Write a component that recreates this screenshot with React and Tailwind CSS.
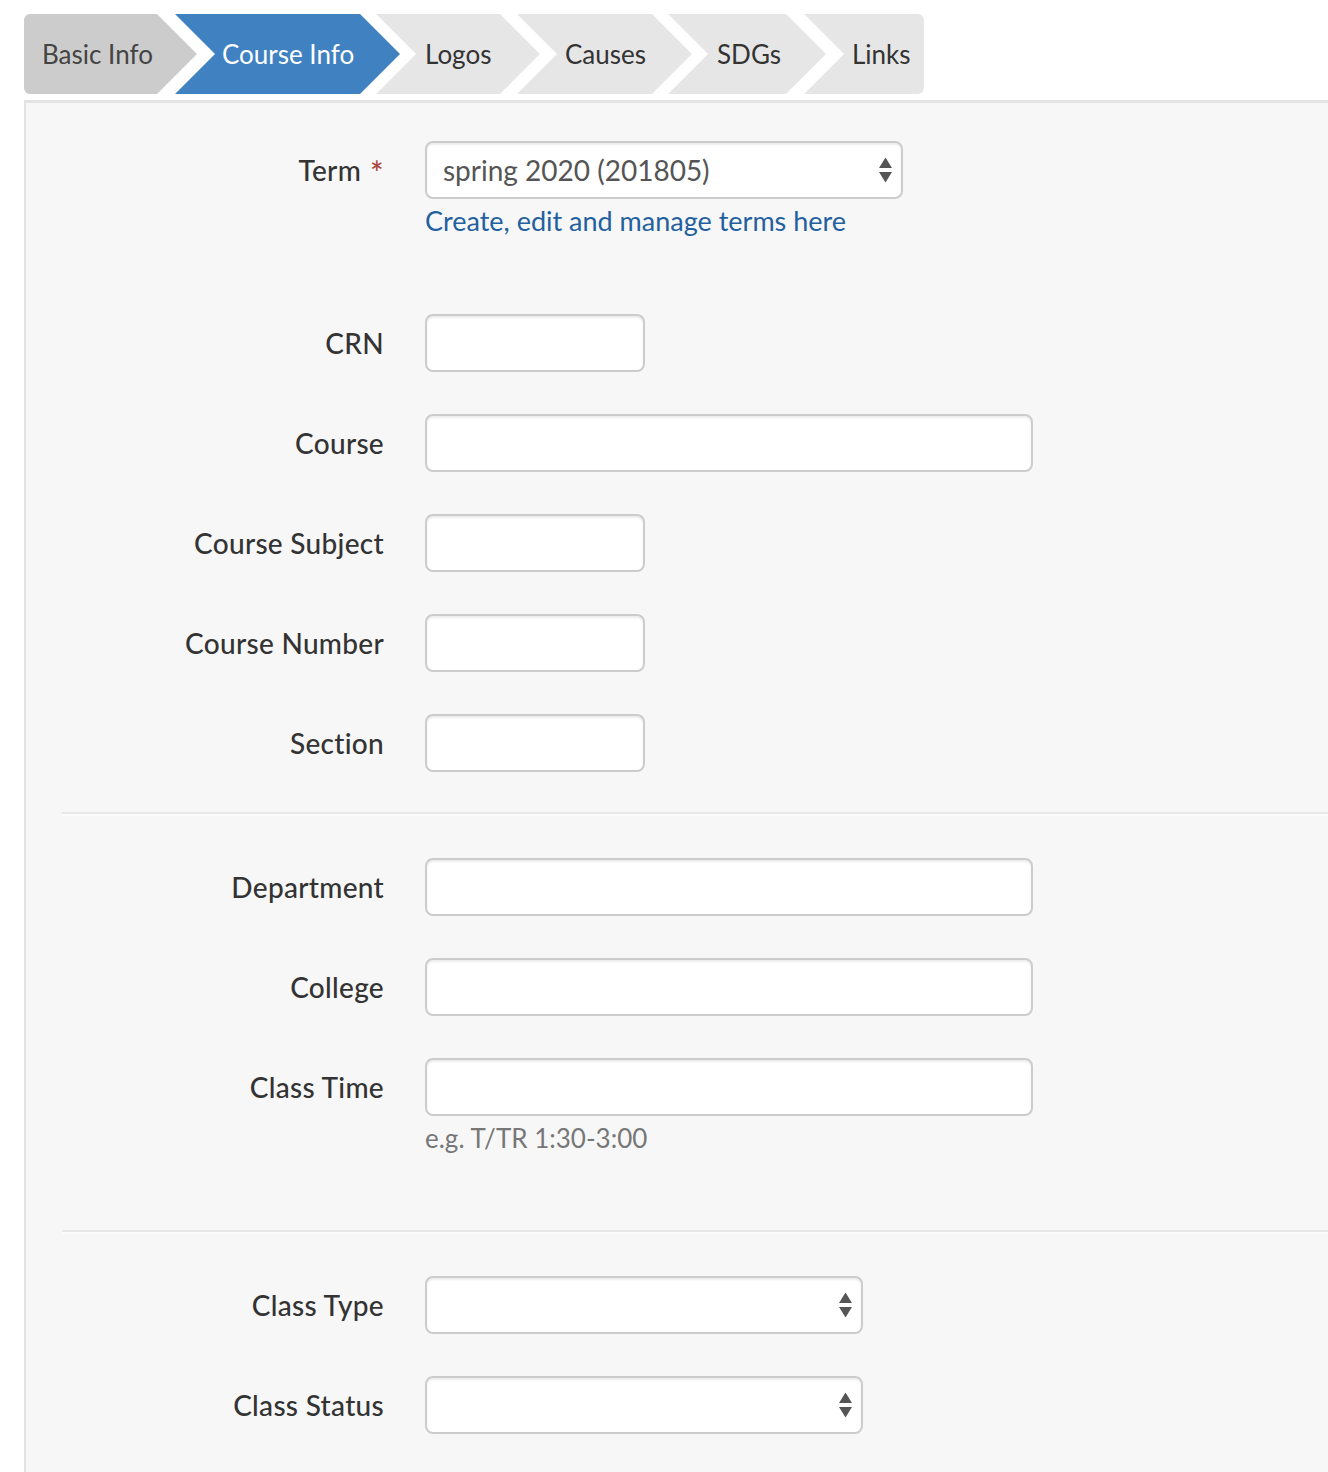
import React from 'react';

const tabs = [
  { label: 'Basic Info', w: 'w-[173px]', ml: '', pl: 'pl-[18px]', bg: 'bg-[#cccccc] text-[#444] rounded-l-[6px]', clip: '[clip-path:polygon(0_0,calc(100%_-_40px)_0,100%_50%,calc(100%_-_40px)_100%,0_100%)]' },
  { label: 'Course Info', w: 'w-[225px]', ml: 'ml-[-22px]', pl: 'pl-[47px]', bg: 'bg-[#3f81c1] text-white', clip: '[clip-path:polygon(0_0,calc(100%_-_40px)_0,100%_50%,calc(100%_-_40px)_100%,0_100%,40px_50%)]' },
  { label: 'Logos', w: 'w-[164px]', ml: 'ml-[-24px]', pl: 'pl-[49px]', bg: 'bg-[#e6e6e6] text-[#333]', clip: '[clip-path:polygon(0_0,calc(100%_-_40px)_0,100%_50%,calc(100%_-_40px)_100%,0_100%,40px_50%)]' },
  { label: 'Causes', w: 'w-[175px]', ml: 'ml-[-23px]', pl: 'pl-[48px]', bg: 'bg-[#e6e6e6] text-[#333]', clip: '[clip-path:polygon(0_0,calc(100%_-_40px)_0,100%_50%,calc(100%_-_40px)_100%,0_100%,40px_50%)]' },
  { label: 'SDGs', w: 'w-[158px]', ml: 'ml-[-24px]', pl: 'pl-[49px]', bg: 'bg-[#e6e6e6] text-[#333]', clip: '[clip-path:polygon(0_0,calc(100%_-_40px)_0,100%_50%,calc(100%_-_40px)_100%,0_100%,40px_50%)]' },
  { label: 'Links', w: 'w-[120px]', ml: 'ml-[-22px]', pl: 'pl-[48px]', bg: 'bg-[#e6e6e6] text-[#333] rounded-r-[6px]', clip: '[clip-path:polygon(0_0,100%_0,100%_100%,0_100%,40px_50%)]' },
];

const Arrows = () => (
  <svg width="13" height="25" viewBox="0 0 13 25" className="absolute right-[9px] top-1/2 -translate-y-1/2">
    <polygon points="6.5,0 13,10.5 0,10.5" fill="#555" />
    <polygon points="0,14.5 13,14.5 6.5,25" fill="#555" />
  </svg>
);

const inputCls = 'h-[58px] rounded-[8px] border-2 border-[#cccccc] bg-white shadow-[inset_0_2px_2px_rgba(0,0,0,0.075)]';

const Row = ({ label, children, className = '' }) => (
  <div className={`flex items-start ${className}`}>
    <div className="w-[361px] shrink-0 pr-[41px] h-[58px] flex items-center justify-end text-[#333] text-[28px] font-medium tracking-[0.3px]">{label}</div>
    <div className="flex flex-col">{children}</div>
  </div>
);

const Input = ({ w }) => <div className={`${inputCls} ${w}`} />;

const Select = ({ w, value }) => (
  <div className={`${inputCls} ${w} relative flex items-center pl-[16px] text-[#555] text-[28px]`}>
    {value}
    <Arrows />
  </div>
);

const Sep = () => <div className="border-t-2 border-[#e8e8e8] border-b-2 border-b-[#fcfcfc] ml-[-2px]" />;

export default function App() {
  return (
    <div className="min-h-[1472px] bg-white text-[26px] leading-[36px]" style={{ fontFamily: 'Lato, "Noto Sans", sans-serif' }}>
      <div className="pt-[14px] pl-[24px]">
        <div className="flex h-[80px]">
          {tabs.map((t) => (
            <div key={t.label} className={`${t.w} ${t.ml} ${t.pl} ${t.bg} ${t.clip} h-full flex items-center shrink-0`}>
              {t.label}
            </div>
          ))}
        </div>
      </div>

      <div className="ml-[24px] mt-[6px] border-t-[3px] border-l-2 border-[#e3e3e3] bg-[#f7f7f7] min-h-[1372px] pl-[38px] pt-[38px]">
        <Row label={<span className="flex items-start">Term<span className="ml-[9px] mt-[6px] text-[#a94442] text-[32px] leading-[30px]">*</span></span>} className="mb-[75px]">
          <Select w="w-[478px]" value="spring 2020 (201805)" />
          <a className="mt-[4px] text-[#23609f] text-[27px]">Create, edit and manage terms here</a>
        </Row>

        <Row label="CRN" className="mb-[42px]"><Input w="w-[220px]" /></Row>
        <Row label="Course" className="mb-[42px]"><Input w="w-[608px]" /></Row>
        <Row label="Course Subject" className="mb-[42px]"><Input w="w-[220px]" /></Row>
        <Row label="Course Number" className="mb-[42px]"><Input w="w-[220px]" /></Row>
        <Row label="Section" className="mb-[40px]"><Input w="w-[220px]" /></Row>

        <Sep />

        <Row label="Department" className="mt-[42px] mb-[42px]"><Input w="w-[608px]" /></Row>
        <Row label="College" className="mb-[42px]"><Input w="w-[608px]" /></Row>
        <Row label="Class Time" className="mb-[74px]">
          <Input w="w-[608px]" />
          <span className="mt-[4px] text-[#777]">e.g. T/TR 1:30-3:00</span>
        </Row>

        <Sep />

        <Row label="Class Type" className="mt-[42px] mb-[42px]"><Select w="w-[438px]" value="" /></Row>
        <Row label="Class Status" className="mb-[42px]"><Select w="w-[438px]" value="" /></Row>
      </div>
    </div>
  );
}
